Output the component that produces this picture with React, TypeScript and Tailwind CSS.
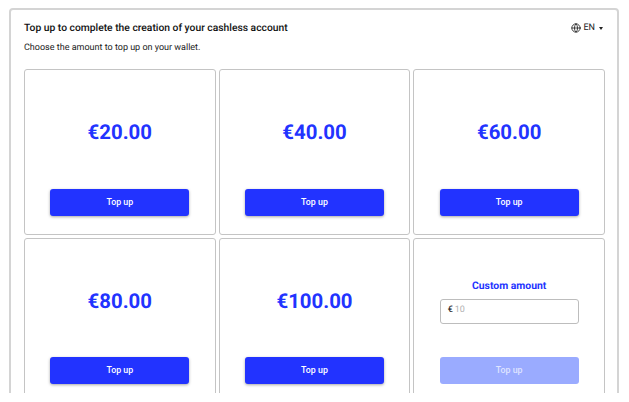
import React from 'react';
import { Globe } from 'lucide-react';

const amounts = ['€20.00', '€40.00', '€60.00', '€80.00', '€100.00'];

function TopUpButton({ disabled = false }: { disabled?: boolean }) {
  return (
    <button
      disabled={disabled}
      className={
        disabled
          ? 'h-[27px] w-[139px] rounded-[3px] bg-[#9aabff] text-[8.8px] font-medium text-[#dfe4ff]'
          : 'h-[27px] w-[139px] rounded-[3px] bg-[#2233ff] text-[8.8px] font-medium text-white shadow-[0_1px_3px_rgba(0,0,0,0.35)]'
      }
    >
      Top up
    </button>
  );
}

function AmountCard({ amount }: { amount: string }) {
  return (
    <div className="flex h-[165.5px] flex-col items-center rounded-[3px] border border-[#c4c4c4] pt-[48px]">
      <div className="h-[28px] text-[20.4px] leading-[28px] font-bold text-[#2233ff]">{amount}</div>
      <div className="mt-[41.9px]">
        <TopUpButton />
      </div>
    </div>
  );
}

export default function App() {
  return (
    <div className="h-[402px] w-[629px] overflow-hidden bg-white font-['Roboto',sans-serif] [text-rendering:geometricPrecision]">
      <div className="h-[393px] overflow-hidden pt-[8px] pl-[9px]">
        <div className="h-[420px] w-[610px] rounded-[4px] border-2 border-[#d4d4d4] px-[13px] pt-[11px]">
          <div className="flex items-start justify-between">
            <h1 className="text-[10.3px] leading-[14px] font-medium text-[#111]">
              Top up to complete the creation of your cashless account
            </h1>
            <div className="mr-[1px] flex items-center gap-[2px] text-[9px] leading-[14px] text-[#222]">
              <Globe size={10} strokeWidth={2} />
              <span>EN</span>
              <span className="ml-[2px] h-0 w-0 border-x-[2.5px] border-t-[3px] border-x-transparent border-t-[#222]" />
            </div>
          </div>
          <p className="mt-[6px] text-[9px] leading-[14px] text-[#222]">Choose the amount to top up on your wallet.</p>
          <div className="mt-[14px] grid w-[581px] grid-cols-3 gap-x-[3px] gap-y-[3px]">
            {amounts.map((a) => (
              <AmountCard key={a} amount={a} />
            ))}
            <div className="flex h-[165.5px] flex-col items-center rounded-[3px] border border-[#c4c4c4] pt-[40px]">
              <div className="text-[10.4px] leading-[14px] font-bold text-[#2233ff]">Custom amount</div>
              <div className="mt-[6px] flex h-[25px] w-[139px] items-center rounded-[3px] border border-[#bdbdbd] px-[7px] text-[9px]">
                <span className="font-medium text-[#333]">€</span>
                <span className="ml-[2px] text-[#b0b0b0]">10</span>
              </div>
              <div className="mt-[32px]">
                <TopUpButton disabled />
              </div>
            </div>
          </div>
        </div>
      </div>
    </div>
  );
}
